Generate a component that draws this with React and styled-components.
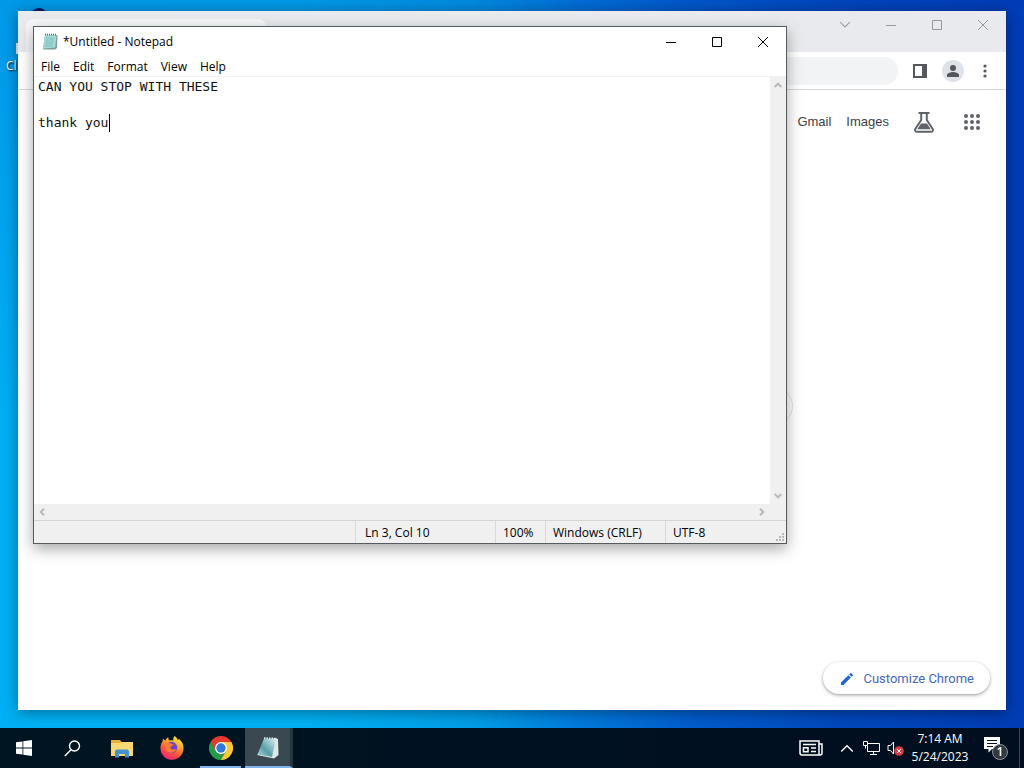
import React, { useState } from "react";
import styled, { createGlobalStyle } from "styled-components";

const ui = `"Open Sans", "Noto Sans", sans-serif`;

const Global = createGlobalStyle`
  *, *::before, *::after { box-sizing: border-box; }
  body { margin: 0; font-family: ${ui}; font-size: 12px; line-height: 16px; }
  button { border: 0; padding: 0; background: none; font: inherit; color: inherit; }
  svg { display: block; }
`;

const Screen = styled.div`
  display: flex;
  flex-direction: column;
  height: 100vh;
  overflow: hidden;
`;

const Desktop = styled.main`
  position: relative;
  flex: 1;
  min-height: 0;
  overflow: hidden;
  background:
    linear-gradient(180deg, rgba(0, 60, 190, 0.2), rgba(0, 60, 190, 0) 60%),
    linear-gradient(90deg, #00b0f4 0%, #00b0f2 30%, #009ee8 46%, #007cdc 56%, #005ccc 68%, #0048bc 82%, #003cb4 100%);
`;

const Shortcut = styled.a`
  position: absolute;
  left: 6px;
  top: 8px;
  width: 66px;
  color: #fff;
  text-decoration: none;
  text-shadow: 1px 1px 2px #000;
`;

const ShortcutArt = styled.svg`
  width: 60px;
  height: 50px;
`;

const Window = styled.section`
  position: absolute;
  display: flex;
  flex-direction: column;
  background: #fff;
`;

const BrowserWindow = styled(Window)`
  inset: 11px 18px 18px;
  box-shadow: 0 2px 14px rgba(0, 0, 0, 0.4);
`;

const NotepadWindow = styled(Window)`
  left: 33px;
  top: 26px;
  width: calc(100% - 270px);
  height: calc(100% - 210px);
  border: 1px solid #565b5e;
  box-shadow: 0 5px 14px rgba(0, 0, 0, 0.34);
`;

const TabStrip = styled.header`
  display: flex;
  justify-content: space-between;
  height: 41px;
  background: #e8eaed;
`;

const Tab = styled.div`
  width: 240px;
  margin: 8px 0 0 8px;
  border-radius: 8px 8px 0 0;
  background: #f6f7f8;
`;

const Controls = styled.div`
  display: flex;
  color: ${(p) => (p.$dim ? "#94979c" : "#000")};
`;

const ControlButton = styled.button`
  display: grid;
  place-items: center;
  width: 46px;
  height: 28px;
`;

const AddressBar = styled.div`
  display: flex;
  align-items: center;
  gap: 12px;
  height: 38px;
  padding: 0 12px 0 100px;
  border-bottom: 1px solid #d5d7da;
  color: #54575b;
`;

const Omnibox = styled.input`
  flex: 1;
  min-width: 0;
  height: 28px;
  border: 0;
  border-radius: 14px;
  background: #f1f3f4;
`;

const IconButton = styled.button`
  display: grid;
  place-items: center;
  width: ${(p) => p.$w || 20}px;
  height: 22px;
  border-radius: 11px;
  background: ${(p) => (p.$filled ? "#dfe2e9" : "transparent")};
`;

const NewTabPage = styled.div`
  display: flex;
  flex: 1;
  flex-direction: column;
  align-items: center;
  justify-content: space-between;
  padding: 16px;
`;

const NewTabNav = styled.nav`
  display: flex;
  align-items: center;
  align-self: flex-end;
  gap: 15px;
  height: 32px;
  padding-right: 6px;
  color: #5f6368;
  font-family: "Liberation Sans", Arial, sans-serif;
  font-size: 13px;

  a { color: #3c4043; text-decoration: none; }
`;

const NavIcon = styled.button`
  display: grid;
  place-items: center;
  width: 24px;
  height: 24px;
  margin-left: ${(p) => p.$gap || 0}px;
`;

const SearchBox = styled.input`
  width: 562px;
  max-width: 100%;
  height: 38px;
  margin-top: 12px;
  border: 1px solid #e2e4e6;
  border-radius: 19px;
`;

const CustomizeButton = styled.button`
  display: flex;
  align-items: center;
  align-self: flex-end;
  gap: 8px;
  height: 32px;
  padding: 1px 16px 0;
  border-radius: 16px;
  background: #fff;
  color: #4468c0;
  font-family: Roboto, sans-serif;
  font-size: 13px;
  box-shadow: 0 1px 3px rgba(0, 0, 0, 0.3), 0 2px 5px rgba(0, 0, 0, 0.1);
`;

const TitleBar = styled.header`
  display: flex;
  align-items: center;
  height: 29px;
  padding-left: 8px;
`;

const Title = styled.h1`
  flex: 1;
  margin: 0 0 0 5px;
  font-size: 12px;
  line-height: 16px;
  font-weight: 400;
`;

const MenuBar = styled.nav`
  display: flex;
  gap: 13px;
  height: 21px;
  padding: 1px 7px 0;
  border-bottom: 1px solid #f0f0f0;
`;

const MenuItem = styled.button`
  line-height: 20px;
`;

const EditorGrid = styled.div`
  display: grid;
  flex: 1;
  grid-template-columns: 1fr 16px;
  grid-template-rows: 1fr 16px;
  min-height: 0;
  background: #f0f0f0;
`;

const EditorPane = styled.div`
  position: relative;
  font-family: "DejaVu Sans Mono", monospace;
  font-size: 13px;
  line-height: 18px;
`;

const Editor = styled.textarea`
  display: block;
  width: 100%;
  height: 100%;
  padding: 1px 4px 0;
  border: 0;
  outline: 0;
  resize: none;
  overflow: hidden;
  background: #fff;
  color: #111;
  font: inherit;
`;

const Caret = styled.span`
  position: absolute;
  left: calc(${(p) => p.$col}ch + 5px);
  top: ${(p) => p.$line * 18 + 1}px;
  width: 1px;
  height: 18px;
  background: #000;
`;

const ScrollTrack = styled.div`
  display: flex;
  flex-direction: ${(p) => (p.$vertical ? "column" : "row")};
  justify-content: space-between;
  color: #b9b9b9;
`;

const ScrollButton = styled.button`
  display: grid;
  place-items: center;
  width: 16px;
  height: 16px;
`;

const StatusBar = styled.footer`
  display: grid;
  grid-template-columns: 1fr 140px 50px 120px 121px;
  height: 23px;
  border-top: 1px solid #d4d4d4;
  background: #f0f0f0;
`;

const StatusCell = styled.div`
  display: flex;
  align-items: center;
  justify-content: space-between;
  padding-top: 2px;
  padding-left: ${(p) => p.$pad || 7}px;
  border-left: ${(p) => (p.$first ? "0" : "1px solid #d9d9d9")};
`;

const Grip = styled.svg`
  align-self: flex-end;
  width: 10px;
  height: 10px;
  margin-right: 1px;
`;

const Taskbar = styled.footer`
  display: flex;
  justify-content: space-between;
  height: 40px;
  background: linear-gradient(90deg, #001522, #000e20);
  color: #fff;
`;

const TaskGroup = styled.div`
  display: flex;
  align-items: center;
`;

const TaskButton = styled.button`
  display: grid;
  place-items: center;
  width: ${(p) => p.$w || 49}px;
  height: 40px;
`;

const OpenTaskButton = styled(TaskButton)`
  width: 41px;
  margin: 0 4px;
  border-bottom: 2px solid #7db4ec;
  padding-top: 2px;
`;

const ActiveTaskButton = styled(OpenTaskButton)`
  width: 48px;
  margin: 0;
  border-right: 3px solid #26343f;
  background: #3a4852;
`;

const TrayButton = styled.button`
  display: grid;
  place-items: center;
  width: ${(p) => p.$w}px;
  height: 40px;
`;

const Clock = styled.time`
  display: flex;
  flex-direction: column;
  width: 66px;
  text-align: center;
  line-height: 18px;
`;

const DesktopEdge = styled.button`
  width: 5px;
  height: 40px;
  border-left: 1px solid #3a4653;
`;

const Minimize = () => (
  <svg width="10" height="10" stroke="currentColor"><path d="M0 5.5h10" /></svg>
);
const Maximize = () => (
  <svg width="10" height="10" stroke="currentColor" fill="none"><path d="M.5.5h9v9h-9z" /></svg>
);
const Close = () => (
  <svg width="10" height="10" stroke="currentColor"><path d="M0 0l10 10M10 0L0 10" /></svg>
);

const turns = { up: 0, right: 90, down: 180, left: 270 };
const Chevron = ({ dir, size = 8, weight = 2 }) => (
  <svg width={size} height={size} viewBox="0 0 8 8" fill="none" stroke="currentColor" strokeWidth={weight}>
    <path d="M.7 6L4 2.7 7.3 6" transform={`rotate(${turns[dir]} 4 4)`} />
  </svg>
);

const SidePanelIcon = () => (
  <svg width="14" height="14" fill="currentColor">
    <path fillRule="evenodd" d="M0 0h14v14H0zM2 2v10h7V2z" />
  </svg>
);

const PersonIcon = () => (
  <svg width="14" height="14" fill="currentColor">
    <circle cx="7" cy="4" r="3" />
    <path d="M1 13v-2c0-2 4-3 6-3s6 1 6 3v2z" />
  </svg>
);

const DotsIcon = () => (
  <svg width="4" height="14" fill="currentColor">
    <circle cx="2" cy="2" r="1.6" /><circle cx="2" cy="7" r="1.6" /><circle cx="2" cy="12" r="1.6" />
  </svg>
);

const FlaskIcon = () => (
  <svg width="22" height="22" viewBox="0 0 22 22" fill="none" stroke="currentColor">
    <path d="M5.500 2h11" strokeWidth="2" />
    <path d="M8.200 2v7L2.300 18c-.8 1.300 0 2.800 1.400 2.800h14.600c1.400 0 2.200-1.500 1.400-2.800L13.800 9V2" strokeWidth="2" />
    <path d="M8 12.500h6l3.700 5.800H4.300z" fill="currentColor" stroke="none" />
  </svg>
);

const AppsIcon = () => (
  <svg width="16" height="16" fill="currentColor">
    {[2, 8, 14].map((y) => [2, 8, 14].map((x) => <circle key={`${x}-${y}`} cx={x} cy={y} r="2" />))}
  </svg>
);

const PencilIcon = () => (
  <svg width="16" height="16" viewBox="0 0 24 24" fill="#2463d4">
    <path d="M3 17.3V21h3.7L17.8 9.9l-3.7-3.7zM20.7 7c.4-.4.4-1 0-1.4l-2.3-2.3a1 1 0 0 0-1.4 0l-1.8 1.8 3.7 3.7z" />
  </svg>
);

const NoteIcon = () => (
  <svg width="16" height="17" viewBox="0 0 16 17">
    <path d="M3 2h12.500l-.5 13-2 1.500H1z" fill="#7d9b9b" />
    <path d="M3 2h11.500l-1.300 12.500L1 15.500z" fill="#a5dbd6" />
    <path d="M4 5h8M3.700 7h8M3.400 9h8M3.100 11h8M2.700 13h8" stroke="#6fb7b4" strokeWidth=".7" />
    <path d="M3 1.700h12" stroke="#55706f" strokeWidth="1.800" strokeDasharray="1 1" />
  </svg>
);

const StartIcon = () => (
  <svg width="16" height="16" fill="#fff">
    <path d="M0 2.300l6.500-.9v6.200H0zM7.300 1.300L16 0v7.600H7.300zM0 8.400h6.500v6.200L0 13.700zM7.300 8.400H16V16l-8.700-1.200z" />
  </svg>
);

const SearchIcon = () => (
  <svg width="17" height="17" fill="none" stroke="#fff" strokeWidth="1.400">
    <circle cx="10.500" cy="6" r="5" /><path d="M7 9.700L.8 16" />
  </svg>
);

const FolderIcon = () => (
  <svg width="22" height="19" viewBox="0 0 22 19">
    <path d="M0 1h9l1.500 2H22v14H0z" fill="#e9ae3c" />
    <path d="M0 4h9l1.500-1H22v14H0z" fill="#fbd774" />
    <path d="M4 18.500V12l1.500-1.500h11L18 12v6.500h-4V15H8v3.500z" fill="#4293cf" />
  </svg>
);

const FirefoxIcon = () => (
  <svg width="24" height="24" viewBox="0 0 24 24">
    <defs>
      <linearGradient id="fox" x1=".8" y1="0" x2=".3" y2="1">
        <stop offset="0" stopColor="#fff04a" /><stop offset=".35" stopColor="#ffab2b" />
        <stop offset=".65" stopColor="#ff563b" /><stop offset="1" stopColor="#e9257b" />
      </linearGradient>
    </defs>
    <path d="M14.500 0c2 1.200 3 2.600 3.300 4.200.6-.3.900-.8 1-1.400 3 2.300 4.700 5.600 4.700 9.200a11.500 11.500 0 0 1-23 .6C.4 9.600 1.200 7 2.600 5.200c0-1 .1-1.900.6-2.700.4 1 1.100 1.600 2 2C6.100 3 6.900 2 8.500 1.300c-.3 1.300-.1 2.300.7 3.200 1.500-.4 3-.5 4.300 0-.5-1.600-.2-3.100 1-4.500z" fill="url(#fox)" />
    <path d="M8.500 6.500c3-1.800 8 0 8.600 4.300.5 3.500-2 6.400-5.300 6.400-3 0-5-2-5.300-4.200z" fill="#7145c9" />
    <path d="M5 8c2.200-1.700 4-1.500 5.700-.4l2.800.8c-.2 1.400-2 1.400-3 2.400-.5 1 .2 2.300 1.800 2.700 1.700.5 2.600-.8 4.200-.2-1.300 2.500-4.400 4-7 3.200C6.200 15.600 4.300 11.500 5 8z" fill="#ff7a33" />
  </svg>
);

const ChromeIcon = () => (
  <svg width="24" height="24" viewBox="0 0 24 24">
    <path d="M12 12L1.600 6A12 12 0 0 1 22.400 6z" fill="#e33b2e" />
    <path d="M12 12L22.400 6A12 12 0 0 1 12 24z" fill="#fcc934" />
    <path d="M12 12v12A12 12 0 0 1 1.600 6z" fill="#269b4a" />
    <path d="M12 6h10.400l-5.200 9z" fill="#fcc934" />
    <path d="M17.200 15L12 24l-5.200-9z" fill="#269b4a" />
    <path d="M6.800 15L1.600 6H12z" fill="#e33b2e" />
    <circle cx="12" cy="12" r="6" fill="#fff" /><circle cx="12" cy="12" r="4.700" fill="#3478df" />
  </svg>
);

const TaskNoteIcon = () => (
  <svg width="24" height="24" viewBox="0 0 24 24">
    <defs>
      <linearGradient id="pad" x1="1" y1="0" x2="0" y2="1">
        <stop offset="0" stopColor="#d5f0f0" /><stop offset=".6" stopColor="#5a9ea8" /><stop offset="1" stopColor="#b4dade" />
      </linearGradient>
    </defs>
    <path d="M18 2l4 1 .5 16-4.500 3.500L1 19z" fill="#dfe8e5" />
    <path d="M8 2.500l12 .5-4 18-14.500-2.500z" fill="url(#pad)" />
    <path d="M8 2l13 .5" stroke="#e6efee" strokeWidth="1.500" strokeDasharray="1.500 1" />
  </svg>
);

const NewsIcon = () => (
  <svg width="24" height="16" fill="none" stroke="#fff" strokeWidth="1.500">
    <path d="M1 1h19v14H3a2 2 0 0 1-2-2zM20 4h3v9a2 2 0 0 1-2 2h-2M4 4.500h13M12 8h5M12 11.500h5M4.500 7.700h4.500v4H4.500z" />
  </svg>
);

const NetworkIcon = () => (
  <svg width="17" height="15" fill="none" stroke="#fff">
    <path d="M5 2.500h11.500v8h-12V5M7 13.500h7M10.500 10.500v3M.5.500h4v4h-4zM2.500 4.500v3" />
  </svg>
);

const VolumeIcon = () => (
  <svg width="17" height="15" fill="none" stroke="#fff">
    <path d="M1 4.500h2.500L6.500 1v12l-3-3.500H1z" />
    <circle cx="12" cy="10" r="4.800" fill="#d23c41" stroke="none" />
    <path d="M10 8l4 4M14 8l-4 4" />
  </svg>
);

const ActionIcon = () => (
  <svg width="25" height="25">
    <path d="M0 1h16v12H8l-3.500 3.500V13H0z" fill="#fff" />
    <path d="M3 4.500h10M3 7.500h10M3 10.500h6" stroke="#00101f" />
    <circle cx="16" cy="16" r="7.500" fill="#303a43" stroke="#8b9299" />
    <text x="16" y="20" textAnchor="middle" fontSize="12" fontWeight="600" fill="#fff">1</text>
  </svg>
);

const menus = ["File", "Edit", "Format", "View", "Help"];

function Browser() {
  return (
    <BrowserWindow aria-label="Browser">
      <TabStrip>
        <Tab />
        <Controls $dim>
          <ControlButton aria-label="Search tabs"><Chevron dir="down" size={12} weight={0.7} /></ControlButton>
          <ControlButton aria-label="Minimize"><Minimize /></ControlButton>
          <ControlButton aria-label="Maximize"><Maximize /></ControlButton>
          <ControlButton aria-label="Close"><Close /></ControlButton>
        </Controls>
      </TabStrip>
      <AddressBar>
        <Omnibox aria-label="Address" />
        <IconButton aria-label="Side panel"><SidePanelIcon /></IconButton>
        <IconButton aria-label="Profile" $filled $w={22}><PersonIcon /></IconButton>
        <IconButton aria-label="Menu" $w={18}><DotsIcon /></IconButton>
      </AddressBar>
      <NewTabPage>
        <NewTabNav>
          <a href="#gmail">Gmail</a>
          <a href="#images">Images</a>
          <NavIcon aria-label="Labs" $gap={8}><FlaskIcon /></NavIcon>
          <NavIcon aria-label="Apps" $gap={9}><AppsIcon /></NavIcon>
        </NewTabNav>
        <SearchBox aria-label="Search" />
        <CustomizeButton><PencilIcon />Customize Chrome</CustomizeButton>
      </NewTabPage>
    </BrowserWindow>
  );
}

function Notepad() {
  const [text, setText] = useState("CAN YOU STOP WITH THESE\n\nthank you");
  const lines = text.split("\n");
  const line = lines.length;
  const col = lines[line - 1].length;
  return (
    <NotepadWindow aria-label="Notepad">
      <TitleBar>
        <NoteIcon />
        <Title>*Untitled - Notepad</Title>
        <Controls>
          <ControlButton aria-label="Minimize"><Minimize /></ControlButton>
          <ControlButton aria-label="Maximize"><Maximize /></ControlButton>
          <ControlButton aria-label="Close"><Close /></ControlButton>
        </Controls>
      </TitleBar>
      <MenuBar>{menus.map((m) => <MenuItem key={m}>{m}</MenuItem>)}</MenuBar>
      <EditorGrid>
        <EditorPane>
          <Editor aria-label="Text" spellCheck={false} value={text} onChange={(e) => setText(e.target.value)} />
          <Caret $line={line - 1} $col={col} />
        </EditorPane>
        <ScrollTrack $vertical>
          <ScrollButton aria-label="Scroll up"><Chevron dir="up" /></ScrollButton>
          <ScrollButton aria-label="Scroll down"><Chevron dir="down" /></ScrollButton>
        </ScrollTrack>
        <ScrollTrack>
          <ScrollButton aria-label="Scroll left"><Chevron dir="left" /></ScrollButton>
          <ScrollButton aria-label="Scroll right"><Chevron dir="right" /></ScrollButton>
        </ScrollTrack>
      </EditorGrid>
      <StatusBar>
        <StatusCell $first />
        <StatusCell $pad={9}>Ln {line}, Col {col + 1}</StatusCell>
        <StatusCell>100%</StatusCell>
        <StatusCell>Windows (CRLF)</StatusCell>
        <StatusCell>
          UTF-8
          <Grip fill="#b8b8b8"><path d="M7 0h2v2H7zM4 3h2v2H4zM7 3h2v2H7zM1 6h2v2H1zM4 6h2v2H4zM7 6h2v2H7z" /></Grip>
        </StatusCell>
      </StatusBar>
    </NotepadWindow>
  );
}

export default function App() {
  return (
    <Screen>
      <Global />
      <Desktop>
        <Shortcut href="#shortcut">
          <ShortcutArt>
            <circle cx="33" cy="8" r="8" fill="#0b1c66" />
            <path d="M10 35h20v11H10z" fill="#eef4fa" />
          </ShortcutArt>
          Cl
        </Shortcut>
        <Browser />
        <Notepad />
      </Desktop>
      <Taskbar>
        <TaskGroup>
          <TaskButton aria-label="Start" $w={48}><StartIcon /></TaskButton>
          <TaskButton aria-label="Search"><SearchIcon /></TaskButton>
          <TaskButton aria-label="File Explorer" $w={50}><FolderIcon /></TaskButton>
          <TaskButton aria-label="Firefox"><FirefoxIcon /></TaskButton>
          <OpenTaskButton aria-label="Chrome"><ChromeIcon /></OpenTaskButton>
          <ActiveTaskButton aria-label="Notepad"><TaskNoteIcon /></ActiveTaskButton>
        </TaskGroup>
        <TaskGroup>
          <TrayButton aria-label="News" $w={48}><NewsIcon /></TrayButton>
          <TrayButton aria-label="Show hidden icons" $w={24}><Chevron dir="up" size={14} weight={0.8} /></TrayButton>
          <TrayButton aria-label="Network" $w={24}><NetworkIcon /></TrayButton>
          <TrayButton aria-label="Volume" $w={24}><VolumeIcon /></TrayButton>
          <Clock><span>7:14 AM</span><span>5/24/2023</span></Clock>
          <TrayButton aria-label="Notifications" $w={46}><ActionIcon /></TrayButton>
          <DesktopEdge aria-label="Show desktop" />
        </TaskGroup>
      </Taskbar>
    </Screen>
  );
}
